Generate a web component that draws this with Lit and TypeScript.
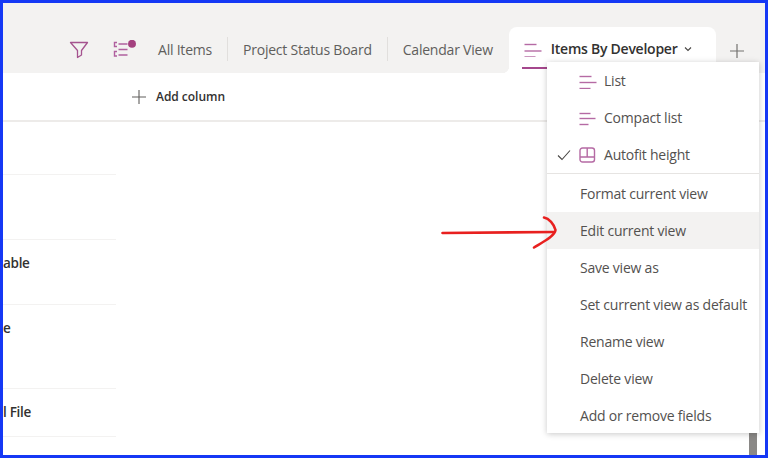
import { LitElement, html, css, svg } from "lit"
import { customElement } from "lit/decorators.js"

const rows = [
  { h: 53, text: "" },
  { h: 65, text: "" },
  { h: 65, text: "able" },
  { h: 84, text: "e" },
  { h: 48, text: "l File" },
]

const lines = (ys: number[][]) => html`
  <svg class="ico" width="18" height="16" viewBox="0 0 18 16">
    ${ys.map(([y, w]) => svg`<line x1="0.5" x2=${0.5 + w} y1=${y} y2=${y} />`)}
  </svg>
`

@customElement("app-root")
export class AppRoot extends LitElement {
  static styles = css`
    :host {
      display: block;
      position: relative;
      width: 768px;
      height: 458px;
      box-sizing: border-box;
      border: 3px solid #1538f5;
      background: #fff;
      overflow: hidden;
      font-family: "Open Sans", "Noto Sans", sans-serif;
      font-size: 14px;
      color: #605e5c;
    }

    svg {
      display: block;
      flex: none;
    }
    .ico line,
    .ico rect,
    .ico path {
      fill: none;
      stroke: #b56aa4;
      stroke-width: 1.4;
    }

    /* tab strip */
    .header {
      display: flex;
      align-items: stretch;
      height: 70px;
      padding: 24px 0 0 66px;
      box-sizing: border-box;
      background: #f3f2f1;
    }
    .tool {
      display: flex;
      align-items: center;
    }
    .filter {
      margin-right: 23px;
    }
    .tasks {
      margin-right: 21px;
    }
    .tab {
      display: flex;
      align-items: center;
      height: 46px;
      padding-bottom: 2px;
      box-sizing: border-box;
      letter-spacing: -0.22px;
      white-space: nowrap;
    }
    .tab.sep::after {
      content: "";
      width: 1px;
      height: 24px;
      margin: 0 15px;
      background: #e1dfdd;
    }
    .tab.last {
      margin-right: 16px;
    }
    .active {
      position: relative;
      display: flex;
      align-items: center;
      gap: 9px;
      width: 207px;
      height: 46px;
      padding: 0 0 3px 15px;
      box-sizing: border-box;
      background: #fff;
      border-radius: 8px 8px 0 0;
      color: #323130;
      font-weight: 600;
      letter-spacing: -0.25px;
      white-space: nowrap;
    }
    .active::before {
      content: "";
      position: absolute;
      left: -7px;
      bottom: 0;
      width: 7px;
      height: 7px;
      background: radial-gradient(circle at 0 0, transparent 7px, #fff 7.5px);
    }
    .active::after {
      content: "";
      position: absolute;
      left: 13px;
      bottom: 4px;
      width: 30px;
      height: 2px;
      background: #a5478d;
    }
    .chev {
      margin-left: -2px;
    }
    .plus {
      margin: 16px 0 0 13px;
    }

    /* toolbar under tabs */
    .toolbar {
      display: flex;
      align-items: center;
      gap: 10px;
      height: 47px;
      padding-left: 129px;
      border-bottom: 2px solid #edebe9;
      color: #323130;
      font-size: 12px;
      font-weight: 600;
      letter-spacing: -0.03px;
    }

    /* clipped list column */
    .list {
      width: 113px;
    }
    .row {
      box-sizing: border-box;
      padding-top: 13px;
      border-bottom: 1px solid #f3f2f1;
      color: #323130;
      font-size: 13.5px;
      line-height: 20px;
      font-weight: 600;
      letter-spacing: -0.3px;
      white-space: pre;
    }

    .scroll {
      position: absolute;
      left: 746px;
      top: 425px;
      width: 8px;
      height: 30px;
      background: #8a8886;
    }

    /* view menu */
    .menu {
      position: absolute;
      left: 544px;
      top: 59px;
      width: 212px;
      height: 371px;
      background: #fff;
      box-shadow: 0 1px 6px rgba(0, 0, 0, 0.22);
      letter-spacing: -0.22px;
    }
    .item {
      display: flex;
      align-items: center;
      height: 37px;
      padding-left: 33px;
      color: #53514f;
      white-space: nowrap;
    }
    .item .ico {
      margin-right: 7px;
      margin-left: -1px;
    }
    .item.hover {
      background: #f3f2f1;
    }
    .check {
      margin-left: -23px;
      margin-right: 9px;
    }
    .divider {
      height: 1px;
      margin: 0 0 1px;
      background: #e6e4e2;
    }

    .arrow {
      position: absolute;
      left: 0;
      top: 0;
      pointer-events: none;
    }
    .arrow path {
      fill: none;
      stroke: #e8201f;
      stroke-width: 2.6;
      stroke-linecap: round;
      stroke-linejoin: round;
    }
  `

  render() {
    return html`
      <div class="header">
        <div class="tool filter">
          <svg width="20" height="18" viewBox="0 0 20 18">
            <path d="M1.5 1.5H18.5L12.5 9.5V14L8.5 16.5V9.5Z" fill="none" stroke="#a5538f" stroke-width="1.3" stroke-linejoin="round" />
          </svg>
        </div>
        <div class="tool tasks">
          <svg width="25" height="20" viewBox="0 0 25 20">
            <g fill="none" stroke="#b0609f" stroke-width="1.4">
              <path d="M5 2.5H2.5V6.500H5M5 11.5H2.5V16H5" />
              <path d="M6.5 4H15.5M6.5 9.5H15.5M6.5 15H15.5" />
            </g>
            <circle cx="20" cy="3.8" r="4" fill="#a4417f" />
          </svg>
        </div>
        <div class="tab sep">All Items</div>
        <div class="tab sep">Project Status Board</div>
        <div class="tab last">Calendar View</div>
        <div class="active">
          ${lines([[3.5, 12], [10, 17], [16, 11]])}
          <span>Items By Developer</span>
          <svg class="chev" width="8" height="6" viewBox="0 0 8 6">
            <path d="M1 1.5L4 4.5L7 1.5" fill="none" stroke="#484644" stroke-width="1.1" />
          </svg>
        </div>
        <div class="plus">
          <svg width="16" height="16" viewBox="0 0 16 16">
            <path d="M8 1V15M1 8H15" fill="none" stroke="#747270" stroke-width="1.2" />
          </svg>
        </div>
      </div>

      <div class="toolbar">
        <svg width="14" height="14" viewBox="0 0 14 14">
          <path d="M7 0V14M0 7H14" fill="none" stroke="#605e5c" stroke-width="1.1" />
        </svg>
        <span>Add column</span>
      </div>

      <div class="list">
        ${rows.map((r) => html`<div class="row" style="height:${r.h}px">${r.text}</div>`)}
      </div>

      <div class="scroll"></div>

      <div class="menu">
        <div class="item">${lines([[3.5, 12], [9.5, 17], [15.5, 11]])}List</div>
        <div class="item">${lines([[3.5, 11], [8.5, 16], [14.5, 9]])}Compact list</div>
        <div class="item">
          <svg class="check" width="14" height="12" viewBox="0 0 14 12">
            <path d="M1 6.5L5 10.5L13 1.5" fill="none" stroke="#484644" stroke-width="1.1" />
          </svg>
          <svg class="ico" width="18" height="16" viewBox="0 0 18 16">
            <rect x="1" y="1" width="14.5" height="14" rx="2.5" />
            <path d="M1 10H15.5M8.2 1V10" />
          </svg>
          Autofit height
        </div>
        <div class="divider"></div>
        <div class="item">Format current view</div>
        <div class="item hover">Edit current view</div>
        <div class="item">Save view as</div>
        <div class="item">Set current view as default</div>
        <div class="item">Rename view</div>
        <div class="item">Delete view</div>
        <div class="item">Add or remove fields</div>
      </div>

      <svg class="arrow" width="762" height="452" viewBox="0 0 762 452">
        <path d="M439.5 230C470 230 510 229.500 551 229" />
        <path d="M541 214.500C546 215.500 551 221 552.500 227C552 233 540 239 531 244.500" />
      </svg>
    `
  }
}
